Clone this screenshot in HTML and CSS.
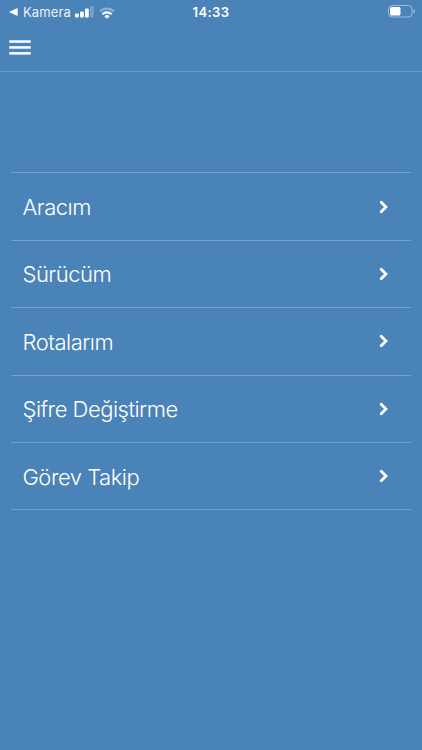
FILE: index.html
```html
<!DOCTYPE html>
<html lang="tr">
<head>
  <meta charset="UTF-8">
  <meta name="viewport" content="width=device-width, initial-scale=1">
  <title>Menü</title>
  <link rel="stylesheet" href="styles.css">
</head>
<body>
  <div class="status-bar">
    <div class="status-left">
      <svg class="back" width="9" height="8" viewBox="0 0 9 8"><path d="M0 4 8.6 0v8z" fill="#fff"/></svg>
      <span class="back-label">Kamera</span>
      <svg class="signal" width="19" height="12" viewBox="0 0 19 12" fill="#fff">
        <rect x="0" y="7.5" width="3.8" height="4" rx="1"/>
        <rect x="5" y="5.5" width="3.8" height="6" rx="1"/>
        <rect x="10" y="2.5" width="3.8" height="9" rx="1"/>
        <rect x="15" y="0" width="3.6" height="11.5" rx="1" opacity=".25"/>
      </svg>
      <svg class="wifi" width="16" height="12" viewBox="0 0 16 12" fill="none" stroke="#fff" stroke-width="2.2">
        <path d="M1 4.4a10 10 0 0 1 14 0" opacity=".35"/>
        <path d="M3.4 7.2a6.6 6.6 0 0 1 9.2 0"/>
        <path d="M8 11.8 5.4 9.3a3.7 3.7 0 0 1 5.2 0z" fill="#fff" stroke="none"/>
      </svg>
    </div>
    <div class="time">14:33</div>
    <svg class="battery" width="28" height="13" viewBox="0 0 28 13">
      <rect x=".5" y=".5" width="23.5" height="11.5" rx="3.5" fill="none" stroke="#fff" stroke-opacity=".45"/>
      <rect x="2" y="2" width="10.5" height="8.5" rx="1.5" fill="#fff"/>
      <path d="M25.3 4.2q1.7.6 1.7 2t-1.7 2z" fill="#fff" fill-opacity=".45"/>
    </svg>
  </div>

  <header class="toolbar">
    <button class="menu-button" aria-label="Menü">
      <svg width="22" height="15" viewBox="0 0 22 15" fill="#fff">
        <rect x=".3" y=".3" width="21.4" height="2.5"/>
        <rect x=".3" y="6.2" width="21.4" height="2.5"/>
        <rect x=".3" y="12.1" width="21.4" height="2.5"/>
      </svg>
    </button>
  </header>

  <ul class="menu">
    <li class="item"><span class="label">Aracım</span><svg class="chevron" width="10" height="14" viewBox="0 0 10 14"><path d="M2.2 2.2 7 7l-4.8 4.8"/></svg></li>
    <li class="item"><span class="label">Sürücüm</span><svg class="chevron" width="10" height="14" viewBox="0 0 10 14"><path d="M2.2 2.2 7 7l-4.8 4.8"/></svg></li>
    <li class="item"><span class="label">Rotalarım</span><svg class="chevron" width="10" height="14" viewBox="0 0 10 14"><path d="M2.2 2.2 7 7l-4.8 4.8"/></svg></li>
    <li class="item"><span class="label">Şifre Değiştirme</span><svg class="chevron" width="10" height="14" viewBox="0 0 10 14"><path d="M2.2 2.2 7 7l-4.8 4.8"/></svg></li>
    <li class="item"><span class="label">Görev Takip</span><svg class="chevron" width="10" height="14" viewBox="0 0 10 14"><path d="M2.2 2.2 7 7l-4.8 4.8"/></svg></li>
  </ul>
</body>
</html>
```
FILE: styles.css
```css
* { box-sizing: border-box; margin: 0; padding: 0; }
body {
  font-family: Inter, "Liberation Sans", sans-serif;
  background: #4a83b8;
  color: #fff;
  min-height: 100vh;
}
/* status bar */
.status-bar {
  display: grid;
  grid-template-columns: 1fr auto 1fr;
  align-items: center;
  height: 24px;
  padding: 0 6px 0 9px;
}
.status-left {
  display: flex;
  align-items: center;
}
.back-label {
  font-size: 13px;
  letter-spacing: 0.1px;
  line-height: 24px;
  margin: 0 4px 0 5px;
  opacity: 0.9;
}
.wifi {
  margin: 1px 0 0 5px;
}
.time {
  font-size: 13px;
  font-weight: 600;
  letter-spacing: 0.4px;
  margin-right: 3px;
}
.battery {
  justify-self: end;
  margin-bottom: 1px;
}
/* toolbar */
.toolbar {
  display: flex;
  align-items: center;
  height: 48px;
  padding-left: 9px;
  border-bottom: 1px solid #6e9dca;
}
.menu-button {
  display: flex;
  background: none;
  border: 0;
}
/* menu */
.menu {
  list-style: none;
  margin: 100.4px 11px 0;
  border-top: 1px solid #739fca;
}
.item {
  display: flex;
  align-items: center;
  justify-content: space-between;
  height: 67.4px;
  padding: 1px 22px 0 11.5px;
  border-bottom: 1px solid #739fca;
}
.label {
  font-size: 22px;
  font-weight: 350;
  letter-spacing: -0.5px;
}
.chevron {
  margin-bottom: 1px;
  fill: none;
  stroke: #fff;
  stroke-width: 2.8;
  stroke-linecap: round;
}
```
